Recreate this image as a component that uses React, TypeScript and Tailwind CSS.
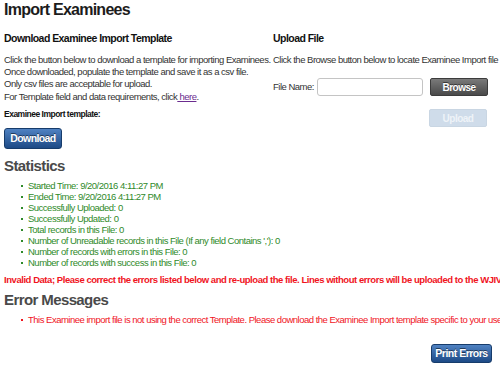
const stats = [
  "Started Time: 9/20/2016 4:11:27 PM",
  "Ended Time: 9/20/2016 4:11:27 PM",
  "Successfully Uploaded: 0",
  "Successfully Updated: 0",
  "Total records in this File: 0",
  "Number of Unreadable records in this File (If any field Contains ','): 0",
  "Number of records with errors in this File: 0",
  "Number of records with success in this File: 0",
];

const errors = [
  "This Examinee import file is not using the correct Template. Please download the Examinee Import template specific to your user account.",
];

function Bullet({ color }: { color: string }) {
  return <span className={`mr-[5px] mt-[5px] h-[2px] w-[2px] shrink-0 ${color}`} />;
}

export default function App() {
  return (
    <div className="h-[368px] w-[500px] overflow-hidden whitespace-nowrap bg-white pl-[4px] font-['Liberation_Sans',Arial,sans-serif] text-[#333]">
      <h1 className="text-[16px] font-bold leading-[20px] tracking-[-0.75px] text-[#1c1c1c]">Import Examinees</h1>

      <div className="mt-[11px] flex">
        {/* download column */}
        <div className="w-[269px] shrink-0">
          <h2 className="text-[10.5px] font-bold leading-[14px] tracking-[-0.55px] text-[#111]">
            Download Examinee Import Template
          </h2>
          <p className="mt-[9px] text-[9.5px] leading-[12px] tracking-[-0.5px]">
            Click the button below to download a template for importing Examinees.
            <br />
            Once downloaded, populate the template and save it as a csv file.
            <br />
            Only csv files are acceptable for upload.
          </p>
          <p className="mt-[1px] text-[9.5px] leading-[12px] tracking-[-0.5px]">
            For Template field and data requirements, click
            <a className="text-[#6b2c8f] underline"> here</a>.
          </p>
          <p className="mt-[6px] text-[8.5px] font-bold leading-[11px] tracking-[-0.5px] text-[#111]">
            Examinee Import template:
          </p>
          <button className="mt-[8px] h-[21px] w-[58px] rounded-[3px] border border-[#173c6b] bg-linear-to-b from-[#4f82c2] to-[#1d4a86] text-[10.5px] font-bold tracking-[-0.6px] text-white [text-shadow:0_-1px_0_rgba(0,0,0,0.5)]">
            Download
          </button>
        </div>

        {/* upload column */}
        <div className="flex-1">
          <h2 className="text-[10.5px] font-bold leading-[14px] tracking-[-0.55px] text-[#111]">Upload File</h2>
          <p className="mt-[9px] text-[9.5px] leading-[12px] tracking-[-0.5px]">
            Click the Browse button below to locate Examinee Import file on your computer.
          </p>
          <div className="mt-[12px] flex items-center">
            <span className="w-[44px] text-[9.5px] tracking-[-0.5px]">File Name:</span>
            <input className="h-[18px] w-[106px] rounded-[3px] border border-[#c4c4c4] bg-white" />
            <button className="ml-[7px] h-[18px] w-[58px] rounded-[2px] border border-[#3c3c3c] bg-linear-to-b from-[#7a7a7a] to-[#4a4a4a] text-[10px] font-bold tracking-[-0.5px] text-white [text-shadow:0_-1px_0_rgba(0,0,0,0.5)]">
              Browse
            </button>
          </div>
          <button className="ml-[156px] mt-[13px] h-[18px] w-[58px] rounded-[2px] border border-[#c9d6e3] bg-[#cfdcea] text-[10px] font-bold tracking-[-0.5px] text-[#eef3f8]">
            Upload
          </button>
        </div>
      </div>

      <h2 className="mt-[8px] text-[15px] font-bold leading-[18px] tracking-[-0.6px] text-[#4a4a4a]">Statistics</h2>
      <ul className="mt-[5px] pl-[17px] text-[9.5px] leading-[11px] tracking-[-0.5px] text-[#2f8a2a]">
        {stats.map((s) => (
          <li key={s} className="flex">
            <Bullet color="bg-[#2f8a2a]" />
            {s}
          </li>
        ))}
      </ul>

      <p className="mt-[6px] text-[9.5px] font-bold leading-[12px] tracking-[-0.45px] text-[#f0141e]">
        Invalid Data; Please correct the errors listed below and re-upload the file. Lines without errors will be uploaded to the WJIV online scoring system.
      </p>

      <h2 className="mt-[5px] text-[15px] font-bold leading-[18px] tracking-[-0.6px] text-[#4a4a4a]">Error Messages</h2>
      <ul className="mt-[5px] pl-[17px] text-[9.5px] leading-[11px] tracking-[-0.5px] text-[#f0141e]">
        {errors.map((e) => (
          <li key={e} className="flex">
            <Bullet color="bg-[#f0141e]" />
            {e}
          </li>
        ))}
      </ul>

      <div className="mt-[19px] flex justify-end pr-[8px]">
        <button className="h-[19px] w-[61px] rounded-[3px] border border-[#173c6b] bg-linear-to-b from-[#4f82c2] to-[#1d4a86] text-[10.5px] font-bold tracking-[-0.5px] text-white [text-shadow:0_-1px_0_rgba(0,0,0,0.5)]">
          Print Errors
        </button>
      </div>
    </div>
  );
}
